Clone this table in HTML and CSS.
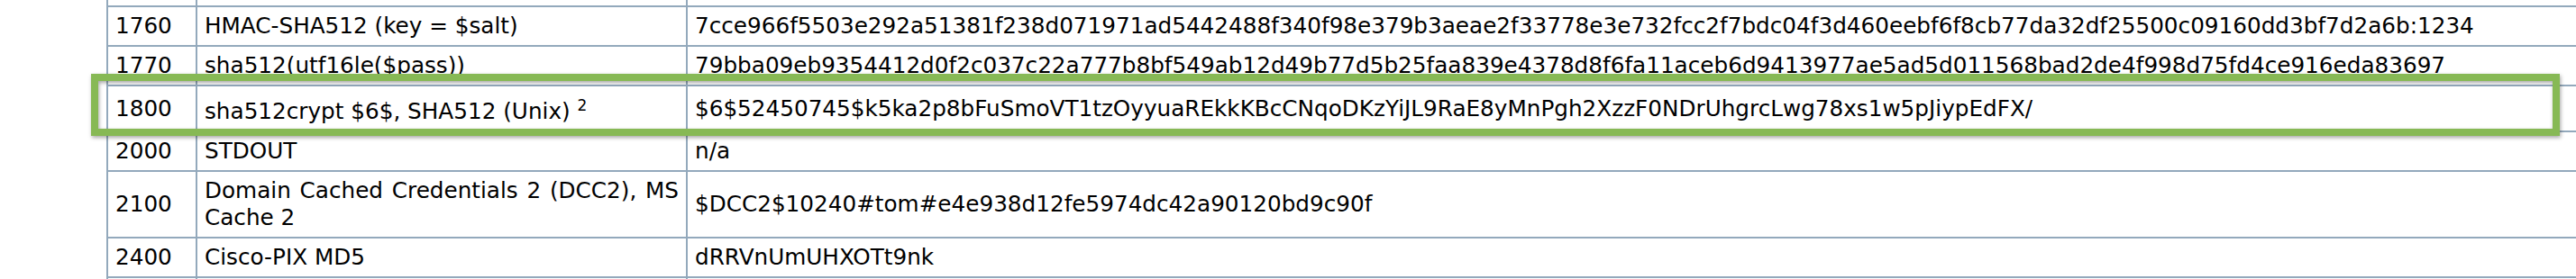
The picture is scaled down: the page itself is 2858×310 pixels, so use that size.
FILE: index.html
```html
<!DOCTYPE html>
<html lang="en">
<head>
    <meta charset="UTF-8">
    <title>Example hashes</title>
    <link rel="stylesheet" href="styles.css">
</head>
<body>
    <div class="page">
        <table class="hashes">
            <colgroup>
                <col class="col-mode">
                <col class="col-name">
                <col class="col-hash">
            </colgroup>
            <tr class="cut">
                <td></td>
                <td></td>
                <td></td>
            </tr>
            <tr>
                <td>1760</td>
                <td>HMAC-SHA512 (key = $salt)</td>
                <td>7cce966f5503e292a51381f238d071971ad5442488f340f98e379b3aeae2f33778e3e732fcc2f7bdc04f3d460eebf6f8cb77da32df25500c09160dd3bf7d2a6b:1234</td>
            </tr>
            <tr>
                <td>1770</td>
                <td>sha512(utf16le($pass))</td>
                <td>79bba09eb9354412d0f2c037c22a777b8bf549ab12d49b77d5b25faa839e4378d8f6fa11aceb6d9413977ae5ad5d011568bad2de4f998d75fd4ce916eda83697</td>
            </tr>
            <tr>
                <td>1800</td>
                <td>sha512crypt $6$, SHA512 (Unix) <sup>2</sup></td>
                <td>$6$52450745$k5ka2p8bFuSmoVT1tzOyyuaREkkKBcCNqoDKzYiJL9RaE8yMnPgh2XzzF0NDrUhgrcLwg78xs1w5pJiypEdFX/</td>
            </tr>
            <tr>
                <td>2000</td>
                <td>STDOUT</td>
                <td>n/a</td>
            </tr>
            <tr>
                <td>2100</td>
                <td>Domain Cached Credentials 2 (DCC2), MS Cache 2</td>
                <td>$DCC2$10240#tom#e4e938d12fe5974dc42a90120bd9c90f</td>
            </tr>
            <tr>
                <td>2400</td>
                <td>Cisco-PIX MD5</td>
                <td>dRRVnUmUHXOTt9nk</td>
            </tr>
            <tr class="cut">
                <td></td>
                <td></td>
                <td></td>
            </tr>
        </table>

        <!-- annotation box round the 1800 row -->
        <div class="highlight"></div>
    </div>
</body>
</html>
```

FILE: styles.css
```css
* { box-sizing: border-box; }
html, body {
    margin: 0;
    padding: 0;
    background: #fff;
    overflow: hidden;
}
body {
    font-family: 'DejaVu Sans', Verdana, sans-serif;
    font-size: 24.7px;
    color: #000;
}
.page {
    position: relative;
    display: flow-root;
    height: 310px;
}
.hashes {
    border-collapse: collapse;
    table-layout: fixed;
    width: 2900px;
    margin: -8px 0 0 118px;
}
.col-mode { width: 99px; }
.col-name { width: 544px; }
.hashes td {
    border: 2px solid #93a9bc;
    padding: 6px 8px;
    line-height: 30px;
    vertical-align: middle;
    white-space: nowrap;
}
.hashes td:nth-child(2) {
    white-space: normal;
    text-align: justify;
}
.hashes .cut td {
    height: 14px;
}
.hashes sup {
    font-size: 17px;
    line-height: 30px;
}
.highlight {
    position: absolute;
    top: 82px;
    left: 101px;
    width: 2739px;
    height: 69px;
    border: 8px solid #87b955;
    filter: drop-shadow(1px 2px 2px rgba(0, 0, 0, 0.35));
}
```
